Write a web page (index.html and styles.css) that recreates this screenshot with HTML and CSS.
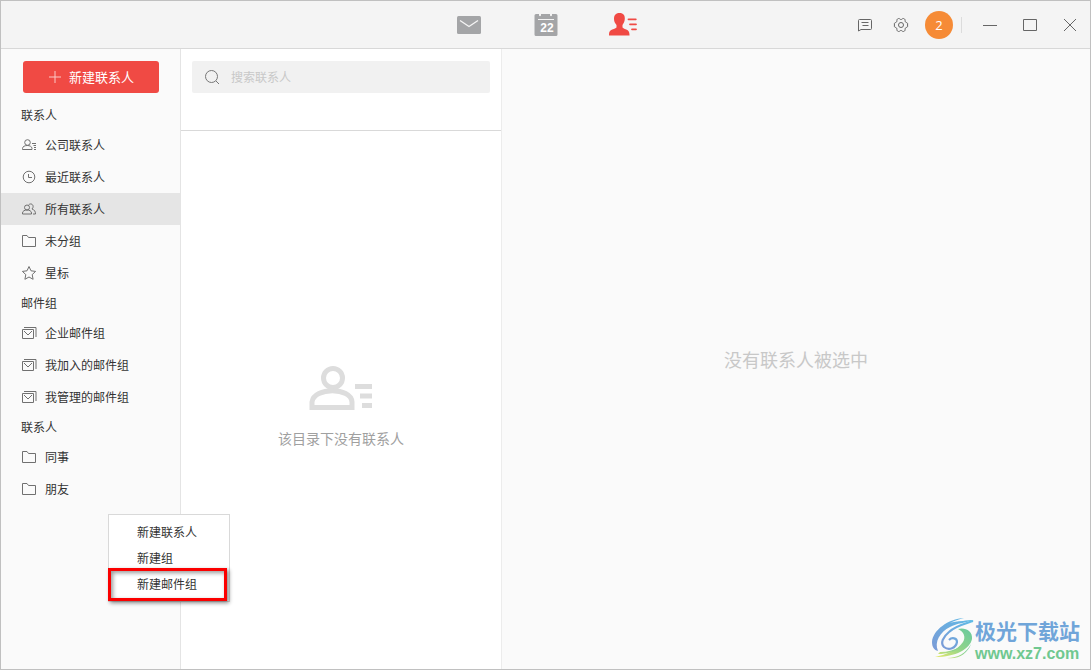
FILE: index.html
```html
<!DOCTYPE html>
<html lang="zh-CN">
<head>
<meta charset="utf-8">
<title>联系人</title>
<link rel="stylesheet" href="styles.css">
</head>
<body>
<svg class="defs" aria-hidden="true">
  <symbol id="folder" viewBox="0 0 16 16"><path d="M1.500 13.500v-11h4.500l1.500 2h7v9z"/></symbol>
  <symbol id="mails" viewBox="0 0 16 16"><path d="M1.500 4.500h11v9h-11zM3 6l4 4 4-4M3 2.500h12V12"/></symbol>
</svg>
<div class="app">
  <header class="topbar">
    <nav class="tabs">
      <button class="tab" aria-label="邮件">
        <svg viewBox="0 0 28 28"><rect x="2" y="5" width="24" height="18" rx="1.500" fill="#a4a5a7"/><path d="M5 9.500l9 6 9-6" fill="none" stroke="#f4f4f4" stroke-width="1.400"/></svg>
      </button>
      <button class="tab" aria-label="日历">
        <svg viewBox="0 0 28 28"><path d="M4 3h3v1.500q1 1.300 2 0V3h9v1.500q1 1.300 2 0V3h4q1.500 0 1.500 1.500v19q0 1.500-1.500 1.500H4q-1.500 0-1.500-1.500v-19Q2.500 3 4 3z" fill="#a4a5a7"/><path d="M6 8.500h16" stroke="#f4f4f4"/><text x="15" y="21" text-anchor="middle" class="tab-day">22</text></svg>
      </button>
      <button class="tab" aria-label="联系人">
        <svg viewBox="0 0 28 28"><path d="M10.500 2c4 0 5.500 2.500 5.300 6-.2 3-1.300 4.500-2.300 6v2.500c1 1.300 3.500 1.500 5.200 2.800 1.500 1.200 1.800 3 1.800 5.200H0c0-2.500.2-4 1.800-5.200C3.500 18 6.500 17.800 7.500 16.500V14C6.300 12.500 5 11 5 8c0-3.500 1.500-6 5.500-6z" fill="#f04a44"/><path d="M19.500 8.300h7.300M21 13.300h6M23 18.300h4" stroke="#f04a44" stroke-width="1.800" stroke-linecap="round"/></svg>
      </button>
    </nav>
    <div class="tools">
      <button class="tool" aria-label="消息"><svg viewBox="0 0 16 16"><path d="M1.500 14V3.500q0-1 1-1h11q1 0 1 1v8q0 1-1 1H4zM4.500 5.500h7M5.500 8.500h6"/></svg></button>
      <button class="tool" aria-label="设置"><svg viewBox="0 0 16 16"><path d="M5.500 1.500q.8-.3 1.200.4.500.6 1.300.6t1.300-.6q.4-.7 1.200-.4l1.200.7q.7.500.4 1.200-.1 1 .3 1.500.5.700 1.400.8.700.2.800.8v3q-.1.600-.8.800-.9.100-1.400.8-.4.600-.3 1.500.3.700-.4 1.200l-1.200.7q-.8.300-1.200-.4-.5-.6-1.300-.6t-1.300.6q-.4.700-1.200.4l-1.200-.7q-.7-.5-.4-1.200.1-.9-.3-1.500-.5-.7-1.400-.8-.7-.2-.8-.8v-3q.1-.6.800-.8.900-.1 1.400-.8.400-.5.300-1.500-.3-.7.400-1.200z"/><circle cx="8" cy="8" r="2.500"/></svg></button>
      <button class="avatar">2</button>
      <div class="window-buttons">
        <button aria-label="最小化"><svg viewBox="0 0 16 16"><path d="M1 8.500h14"/></svg></button>
        <button aria-label="最大化"><svg viewBox="0 0 16 16"><path d="M1.500 2.500h13v11h-13z"/></svg></button>
        <button aria-label="关闭"><svg viewBox="0 0 16 16"><path d="M2 2l12 12M14 2L2 14"/></svg></button>
      </div>
    </div>
  </header>
  <main class="content">
    <aside class="sidebar">
      <button class="create"><svg viewBox="0 0 14 14"><path d="M7 1v12M1 7h12"/></svg>新建联系人</button>
      <h2>联系人</h2>
      <button class="item"><svg viewBox="0 0 16 16"><circle cx="6.500" cy="5.500" r="2.800"/><path d="M1.500 12.500v-1c0-4 9.500-4 9.500 0v1zM11 6.500h4M12.500 8.500H15M13 10.500h2M13 12.500h2"/></svg>公司联系人</button>
      <button class="item"><svg viewBox="0 0 16 16"><circle cx="8" cy="8" r="5.800"/><path d="M7.500 5v3.500H11"/></svg>最近联系人</button>
      <button class="item selected"><svg viewBox="0 0 16 16"><circle cx="6" cy="6.500" r="2.500"/><path d="M1.500 13v-1c0-4 9-4 9 0v1zM7.500 4c3-3 6.500 1 3.500 4 2.500.8 3.500 2.500 3.500 5H12"/></svg>所有联系人</button>
      <button class="item"><svg><use href="#folder"/></svg>未分组</button>
      <button class="item"><svg viewBox="0 0 16 16"><path d="M8 1.500l2 4.300 4.600.6-3.400 3.200.9 4.700L8 12l-4.100 2.300.9-4.700L1.400 6.400 6 5.800z"/></svg>星标</button>
      <h2>邮件组</h2>
      <button class="item"><svg><use href="#mails"/></svg>企业邮件组</button>
      <button class="item"><svg><use href="#mails"/></svg>我加入的邮件组</button>
      <button class="item"><svg><use href="#mails"/></svg>我管理的邮件组</button>
      <h2>联系人</h2>
      <button class="item"><svg><use href="#folder"/></svg>同事</button>
      <button class="item"><svg><use href="#folder"/></svg>朋友</button>
    </aside>
    <section class="list">
      <div class="search-row">
        <label class="search">
          <svg viewBox="0 0 16 16"><circle cx="7.500" cy="7.500" r="6"/><path d="M12 12l3 3"/></svg>
          <input type="search" placeholder="搜索联系人" aria-label="搜索联系人">
        </label>
      </div>
      <div class="empty">
        <svg viewBox="0 0 64 48"><circle cx="24" cy="14" r="9.500"/><path d="M3 43.500V38c2-15 39-15 40 0v5.500zM46 22.500h17M51 32h12M53 41.500h10"/></svg>
        <p>该目录下没有联系人</p>
      </div>
    </section>
    <section class="detail"><p>没有联系人被选中</p></section>
  </main>
  <div class="menu" role="menu">
    <button role="menuitem">新建联系人</button>
    <button role="menuitem">新建组</button>
    <button role="menuitem">新建邮件组</button>
    <div class="highlight"></div>
  </div>
  <div class="brand">
    <svg viewBox="0 0 44 44">
      <defs>
        <linearGradient id="blue" x1="0" y1="1" x2="1" y2="0"><stop offset="0" stop-color="#7c9ad6"/><stop offset="1" stop-color="#5ebbe6"/></linearGradient>
        <linearGradient id="green" x1="0" y1="1" x2="1" y2="0"><stop offset="0" stop-color="#e6e96a"/><stop offset=".5" stop-color="#8fd48a"/><stop offset="1" stop-color="#68c9a0"/></linearGradient>
      </defs>
      <path d="M33 1C17 2 2 13 1 25c0 5 2 8 6 9C3 25 9 15 19 10c7-4 15-4 24-7-4 0-8 0-11 1-6 0-10 1-13 2 4-2 9-4 14-5z" fill="url(#blue)"/>
      <path d="M42 4c-9 3-18 5-24 11-6 5-9 11-5 15 5 4 12 1 13-5 0-4-5-5-8-2" fill="none" stroke="url(#blue)" stroke-width="2.200"/>
      <path d="M27 12c7-2 15 2 14 10-2 10-16 18-37 18 10-2 23-7 28-15 3-5 1-10-5-13z" fill="url(#green)"/>
      <path d="M30 29c-6 6-14 8-23 8l2-2c8 0 15-2 21-6zM16 41c11 0 19-5 24-14-3 9-13 16-24 14z" fill="url(#green)"/>
    </svg>
    <div class="brand-text"><strong>极光下载站</strong><span>www.xz7.com</span></div>
  </div>
</div>
</body>
</html>
```
FILE: styles.css
```css
* { box-sizing: border-box; }
body {
  margin: 0;
  font: 12px/20px "Noto Sans CJK SC", "Liberation Sans", sans-serif;
  color: #333;
}
button {
  padding: 0;
  border: 0;
  background: none;
  font: inherit;
  color: inherit;
}
h2, p { margin: 0; font-size: inherit; font-weight: 400; }
svg { display: block; flex: none; }
.defs { position: absolute; width: 0; height: 0; }
.app {
  position: relative;
  display: flex;
  flex-direction: column;
  min-height: 100vh;
  border: 1px solid #c0c0c0;
  background: #fafafa;
}
.topbar {
  display: grid;
  grid-template-columns: 1fr auto 1fr;
  align-items: center;
  height: 48px;
  border-bottom: 1px solid #d8d8d8;
  background: #f4f4f4;
}
.tabs { grid-column: 2; display: flex; gap: 49px; }
.tab, .tab svg { width: 28px; height: 28px; }
.tab-day { font: bold 12px "Liberation Sans", sans-serif; fill: #fff; }
.tools {
  display: flex;
  align-items: center;
  justify-content: flex-end;
  gap: 20px;
  padding-right: 12px;
}
.tool svg, .window-buttons svg {
  width: 16px;
  height: 16px;
  fill: none;
  stroke: #666;
}
.avatar {
  width: 28px;
  height: 28px;
  margin: 0 -12px 0 -4px;
  border-radius: 50%;
  background: #f68b36;
  color: #fff;
  font: 13px "Open Sans", sans-serif;
}
.window-buttons {
  display: flex;
  gap: 24px;
  padding-left: 20px;
  border-left: 1px solid #dcdcdc;
}
.content { display: flex; flex: 1; }
.sidebar {
  flex: none;
  width: 180px;
  padding-top: 12px;
  border-right: 1px solid #e4e4e4;
}
.create {
  display: flex;
  align-items: center;
  justify-content: center;
  gap: 7px;
  width: 136px;
  height: 32px;
  margin: 0 22px 8px;
  border-radius: 3px;
  background: #f04a44;
  color: #fff;
  font-size: 13px;
}
.create svg { width: 14px; height: 14px; stroke: #fbc8c5; }
.sidebar h2 { padding: 4px 20px; }
.item {
  display: flex;
  align-items: center;
  gap: 8px;
  width: 100%;
  height: 32px;
  padding-left: 20px;
}
.item svg { width: 16px; height: 16px; fill: none; stroke: #707070; }
.item.selected { background: #e5e5e5; }
.list {
  display: flex;
  flex-direction: column;
  flex: none;
  width: 321px;
  border-right: 1px solid #ececec;
  background: #fff;
}
.search-row { height: 82px; padding: 12px 11px; border-bottom: 1px solid #d9d9d9; }
.search {
  display: flex;
  align-items: center;
  gap: 11px;
  height: 32px;
  padding: 0 12px;
  border-radius: 2px;
  background: #f1f1f1;
}
.search svg { width: 16px; height: 16px; fill: none; stroke: #777; }
.search input {
  flex: 1;
  min-width: 0;
  padding: 0;
  border: 0;
  outline: 0;
  background: none;
  font: inherit;
}
.search input::placeholder { color: #c8c8c8; }
.empty {
  display: flex;
  flex: 1;
  flex-direction: column;
  align-items: center;
  justify-content: center;
  gap: 16px;
  padding-top: 12px;
  color: #a0a0a0;
  font-size: 14px;
}
.empty svg { width: 64px; height: 48px; fill: none; stroke: #ddd; stroke-width: 5px; }
.detail {
  display: flex;
  flex: 1;
  align-items: center;
  justify-content: center;
  color: #c8c8c8;
  font-size: 18px;
}
.menu {
  position: absolute;
  top: 513px;
  left: 107px;
  display: flex;
  flex-direction: column;
  width: 122px;
  padding: 4px 0;
  border: 1px solid #d9d9d9;
  background: #fff;
}
.menu button { height: 26px; padding-left: 28px; text-align: left; }
.highlight {
  position: absolute;
  right: 2px;
  bottom: 0;
  left: -1px;
  height: 33px;
  border: 3px solid #fb0000;
  box-shadow: 2px 2px 4px #0007, inset 2px 2px 4px #0006;
}
.brand {
  position: absolute;
  right: 10px;
  bottom: 6px;
  display: flex;
  align-items: center;
}
.brand svg { width: 44px; height: 44px; }
.brand-text { display: flex; flex-direction: column; }
.brand strong { color: #70a5d9; font-size: 21px; line-height: 30px; }
.brand span { color: #70c890; font: bold 16px/18px "Liberation Sans", sans-serif; }
```
